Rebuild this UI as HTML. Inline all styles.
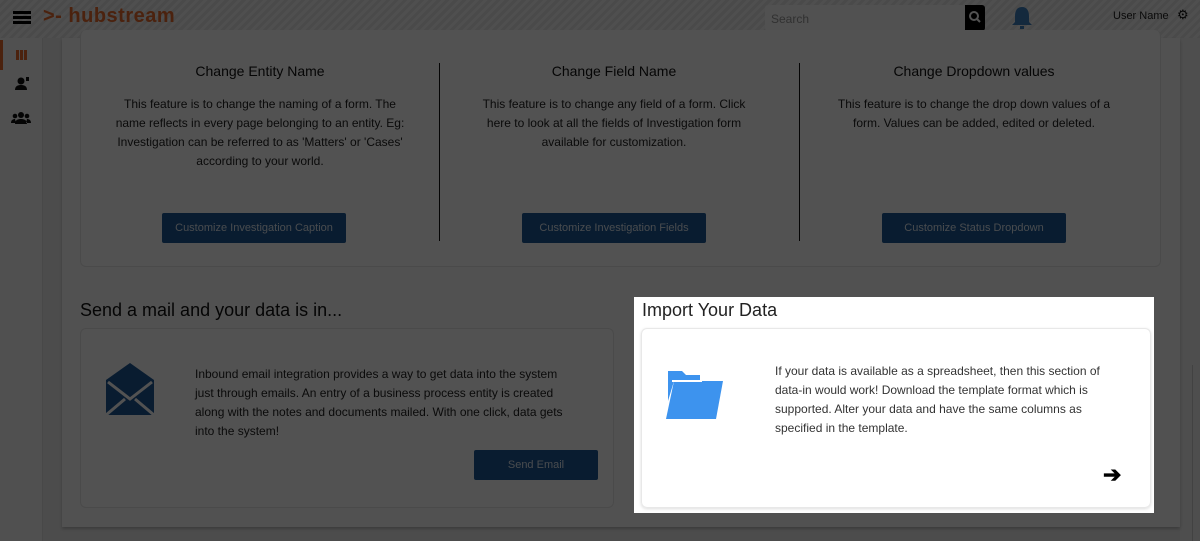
<!DOCTYPE html>
<html><head><meta charset="utf-8"><style>
*{box-sizing:border-box;margin:0;padding:0}
body{width:1200px;height:541px;overflow:hidden;background:#ececec;font-family:"Liberation Sans",sans-serif;position:relative;color:#1e1e1e}
.hdr{position:absolute;left:0;top:0;width:1200px;height:38px;background:repeating-linear-gradient(135deg,#f6f6f6 0 3px,#e6e6e6 3px 6px)}
.side{position:absolute;left:0;top:38px;width:43px;height:503px;background:#f8f8f8;border-right:1px solid #e0e0e0}
.main{position:absolute;left:62px;top:38px;width:1118px;height:489px;background:#fafafa;box-shadow:0 2px 3px #bbb}
.card{position:absolute;background:#fdfdfd;border:1px solid #e6e6e6;border-radius:6px}
.t{position:absolute;text-align:center;font-size:14px;color:#111}
.p{position:absolute;text-align:center;font-size:12px;line-height:19px;color:#222}
.btn{position:absolute;background:#1d5895;color:#dfe8f2;font-size:11px;text-align:center;line-height:30px;border-radius:2px}
.div{position:absolute;top:63px;width:1px;height:178px;background:#111}
.ov{position:absolute;left:0;top:0;width:1200px;height:541px;background:rgba(0,0,0,0.68)}
</style></head><body>
<div class="hdr"></div>
<div style="position:absolute;left:13px;top:11px;width:18px;height:3px;background:#000;box-shadow:0 5px 0 #000,0 10px 0 #000"></div>
<div style="position:absolute;left:43px;top:5px;font-size:20px;font-weight:bold;color:#e8692c;letter-spacing:0.5px">&gt;- hubstream</div>
<div style="position:absolute;left:765px;top:5px;width:200px;height:26px;background:#fafafa;border-radius:3px;font-size:12px;color:#999;padding:7px 6px">Search</div>
<div style="position:absolute;left:965px;top:5px;width:20px;height:26px;background:#000;border-radius:0 3px 3px 0"><svg width="20" height="26"><circle cx="9" cy="11" r="4" stroke="#fff" stroke-width="2" fill="none"/><line x1="12" y1="14" x2="15" y2="17" stroke="#fff" stroke-width="2"/></svg></div>
<svg style="position:absolute;left:1010px;top:4px" width="24" height="28"><path d="M12 3c-5 0-7 4-7 9v6l-3 3h20l-3-3v-6c0-5-2-9-7-9z" fill="#3f7fbf"/><rect x="10" y="22" width="4" height="3" fill="#3f7fbf"/></svg>
<div style="position:absolute;left:1113px;top:10px;font-size:11px;color:#222">User Name</div>
<div style="position:absolute;left:1177px;top:7px;font-size:13px;color:#111">⚙</div>
<div class="side"></div>
<div style="position:absolute;left:0;top:40px;width:3px;height:30px;background:#e8692c"></div>
<div style="position:absolute;left:16px;top:50px;width:11px;height:10px;background:repeating-linear-gradient(90deg,#e8692c 0 3px,transparent 3px 4px)"></div>
<svg style="position:absolute;left:14px;top:76px" width="16" height="16"><circle cx="7" cy="5" r="3.5" fill="#111"/><path d="M1 14c0-4 3-5 6-5s6 1 6 5z" fill="#111"/><rect x="12" y="1" width="3" height="4" fill="#111"/></svg>
<svg style="position:absolute;left:11px;top:111px" width="20" height="14"><circle cx="10" cy="4" r="3" fill="#111"/><circle cx="4" cy="5" r="2.3" fill="#111"/><circle cx="16" cy="5" r="2.3" fill="#111"/><path d="M4 13c0-4 3-5 6-5s6 1 6 5zM0 12c0-3 2-4 4-4l1 4zM20 12c0-3-2-4-4-4l-1 4z" fill="#111"/></svg>
<div style="position:absolute;left:1180px;top:38px;width:20px;height:503px;background:#f2f2f2"></div>
<div style="position:absolute;left:1192px;top:365px;width:1px;height:176px;background:#ccc"></div>
<div class="main"></div>
<div class="card" style="left:80px;top:30px;width:1081px;height:237px;border-top:none"></div>
<div class="t" style="left:80px;top:63px;width:360px">Change Entity Name</div>
<div class="p" style="left:112px;top:95px;width:296px">This feature is to change the naming of a form. The name reflects in every page belonging to an entity. Eg: Investigation can be referred to as 'Matters' or 'Cases' according to your world.</div>
<div class="btn" style="left:162px;top:213px;width:184px">Customize Investigation Caption</div>
<div class="div" style="left:439px"></div>
<div class="t" style="left:440px;top:63px;width:348px">Change Field Name</div>
<div class="p" style="left:472px;top:95px;width:284px">This feature is to change any field of a form. Click here to look at all the fields of Investigation form available for customization.</div>
<div class="btn" style="left:522px;top:213px;width:184px">Customize Investigation Fields</div>
<div class="div" style="left:799px"></div>
<div class="t" style="left:800px;top:63px;width:348px">Change Dropdown values</div>
<div class="p" style="left:830px;top:95px;width:288px">This feature is to change the drop down values of a form. Values can be added, edited or deleted.</div>
<div class="btn" style="left:882px;top:213px;width:184px">Customize Status Dropdown</div>
<div style="position:absolute;left:80px;top:300px;font-size:18px;color:#111">Send a mail and your data is in...</div>
<div class="card" style="left:80px;top:328px;width:534px;height:180px"></div>
<svg style="position:absolute;left:105px;top:363px" width="50" height="52"><path d="M25 0L49 17V52H1V17Z" fill="#1d5895"/><path d="M3 19L25 36L47 19" stroke="#fdfdfd" stroke-width="3" fill="none"/><path d="M1 52L20 36M49 52L30 36" stroke="#fdfdfd" stroke-width="3"/></svg>
<div class="p" style="left:195px;top:365px;width:380px;text-align:left">Inbound email integration provides a way to get data into the system just through emails. An entry of a business process entity is created along with the notes and documents mailed. With one click, data gets into the system!</div>
<div class="btn" style="left:474px;top:450px;width:124px">Send Email</div>
<div class="ov"></div>
<div style="position:absolute;left:634px;top:297px;width:520px;height:216px;background:#fff"></div>
<div style="position:absolute;left:642px;top:300px;font-size:18px;color:#222">Import Your Data</div>
<div style="position:absolute;left:641px;top:328px;width:510px;height:180px;border:1px solid #e8e8e8;border-radius:6px;box-shadow:0 1px 3px #ddd"></div>
<svg style="position:absolute;left:666px;top:371px" width="58" height="48"><path d="M2 0H16L20 4H34V10H8L2 30Z" fill="#3d93ee"/><path d="M8 10H57L50 48H0Z" fill="#3d93ee"/><path d="M6 10H36" stroke="#fff" stroke-width="2"/></svg>
<div class="p" style="left:775px;top:362px;width:340px;text-align:left;color:#333">If your data is available as a spreadsheet, then this section of data-in would work! Download the template format which is supported. Alter your data and have the same columns as specified in the template.</div>
<div style="position:absolute;left:1103px;top:462px;font-size:22px;font-weight:bold;color:#000">➔</div>
</body></html>
